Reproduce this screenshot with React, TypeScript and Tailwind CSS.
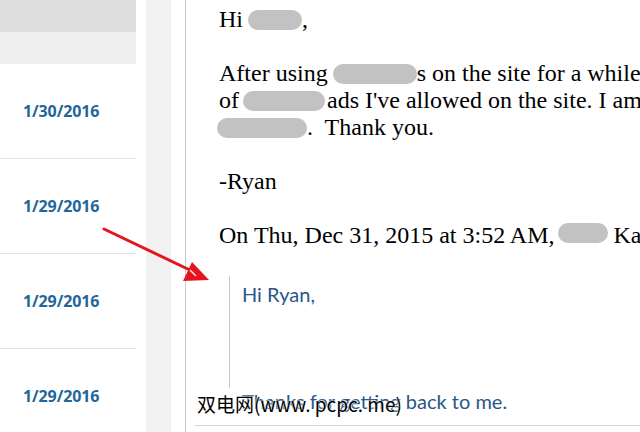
import React from 'react';

const dates = ['1/30/2016', '1/29/2016', '1/29/2016', '1/29/2016'];

function Blob({ w, className = '' }: { w: string; className?: string }) {
  return <span className={`inline-block h-[20px] rounded-full bg-[#c2c2c2] align-[-3px] ${w} ${className}`} />;
}

function Arrow() {
  return (
    <svg className="absolute left-0 top-0 pointer-events-none" width="640" height="432">
      <line x1="104" y1="229" x2="194" y2="272" stroke="#e3161d" strokeWidth="3" strokeLinecap="round" />
      <polygon points="192,262 183,281 209,280" fill="#e3161d" />
      <line x1="190" y1="270" x2="196" y2="276" stroke="#fbe5e5" strokeWidth="1.5" />
    </svg>
  );
}

export default function App() {
  return (
    <div className="relative flex w-[640px] h-[432px] overflow-hidden bg-white">
      {/* message list */}
      <div className="w-[136px] shrink-0 flex flex-col">
        <div className="h-[32px] shrink-0 bg-[#dedede]" />
        <div className="h-[32px] shrink-0 bg-[#efefef]" />
        {dates.map((d, i) => (
          <div key={i} className="h-[95px] shrink-0 border-b border-[#e4e4e4] flex items-center pl-[23px]">
            <span className="font-['Open_Sans',sans-serif] font-bold text-[16px] tracking-[-0.1px] text-[#1f669a]">{d}</span>
          </div>
        ))}
      </div>
      <div className="w-[10px] shrink-0" />
      <div className="w-[25px] shrink-0 bg-[#f1f1f1]" />
      <div className="w-[14px] shrink-0" />

      {/* email body */}
      <div className="flex-1 border-l border-[#c8c8c8] overflow-hidden">
        <div className="ml-[9px] h-[426px] border-b border-[#d2d2d2] pl-[24px] pt-[6px] font-['Liberation_Serif',serif] text-[24px] leading-[27px] text-black whitespace-nowrap">
          <p className="mb-[27px]">
            Hi<Blob w="w-[54px]" className="ml-[5px]" />,
          </p>
          <p className="mb-[27px]">
            After using <Blob w="w-[84px]" className="-ml-[1px]" />s on the site for a while, I've noticed
            <br />
            of<Blob w="w-[82px]" className="ml-[4px] mr-[2px]" />ads I've allowed on the site. I am
            <br />
            <Blob w="w-[90px]" className="-ml-[2px]" />.&nbsp; Thank you.
          </p>
          <p className="mb-[27px]">-Ryan</p>
          <p>
            On Thu, Dec 31, 2015 at 3:52 AM, <Blob w="w-[50px]" className="h-[17px] align-[0px] -ml-[3px]" /> Ka
          </p>
          <div className="ml-[10px] mt-[27px] h-[112px] border-l border-[#c9c9c9] pl-[12px] pt-[6px] font-['Lato',sans-serif] text-[20px] leading-[24px] text-[#2a5787]">
            Hi Ryan,
          </div>
          <div className="pl-[23px] pt-[1px] font-['Lato',sans-serif] text-[20px] leading-[24px] text-[#2a5787]">
            Thanks for getting back to me.
          </div>
        </div>
      </div>

      <Arrow />

      <div className="absolute left-[197px] top-[392px] font-['Noto_Sans_CJK_SC',sans-serif] text-[19px] leading-[24px] text-black [text-shadow:0_0_2px_#fff,0_0_2px_#fff]">
        双电网(www. pcpc. me)
      </div>
    </div>
  );
}
